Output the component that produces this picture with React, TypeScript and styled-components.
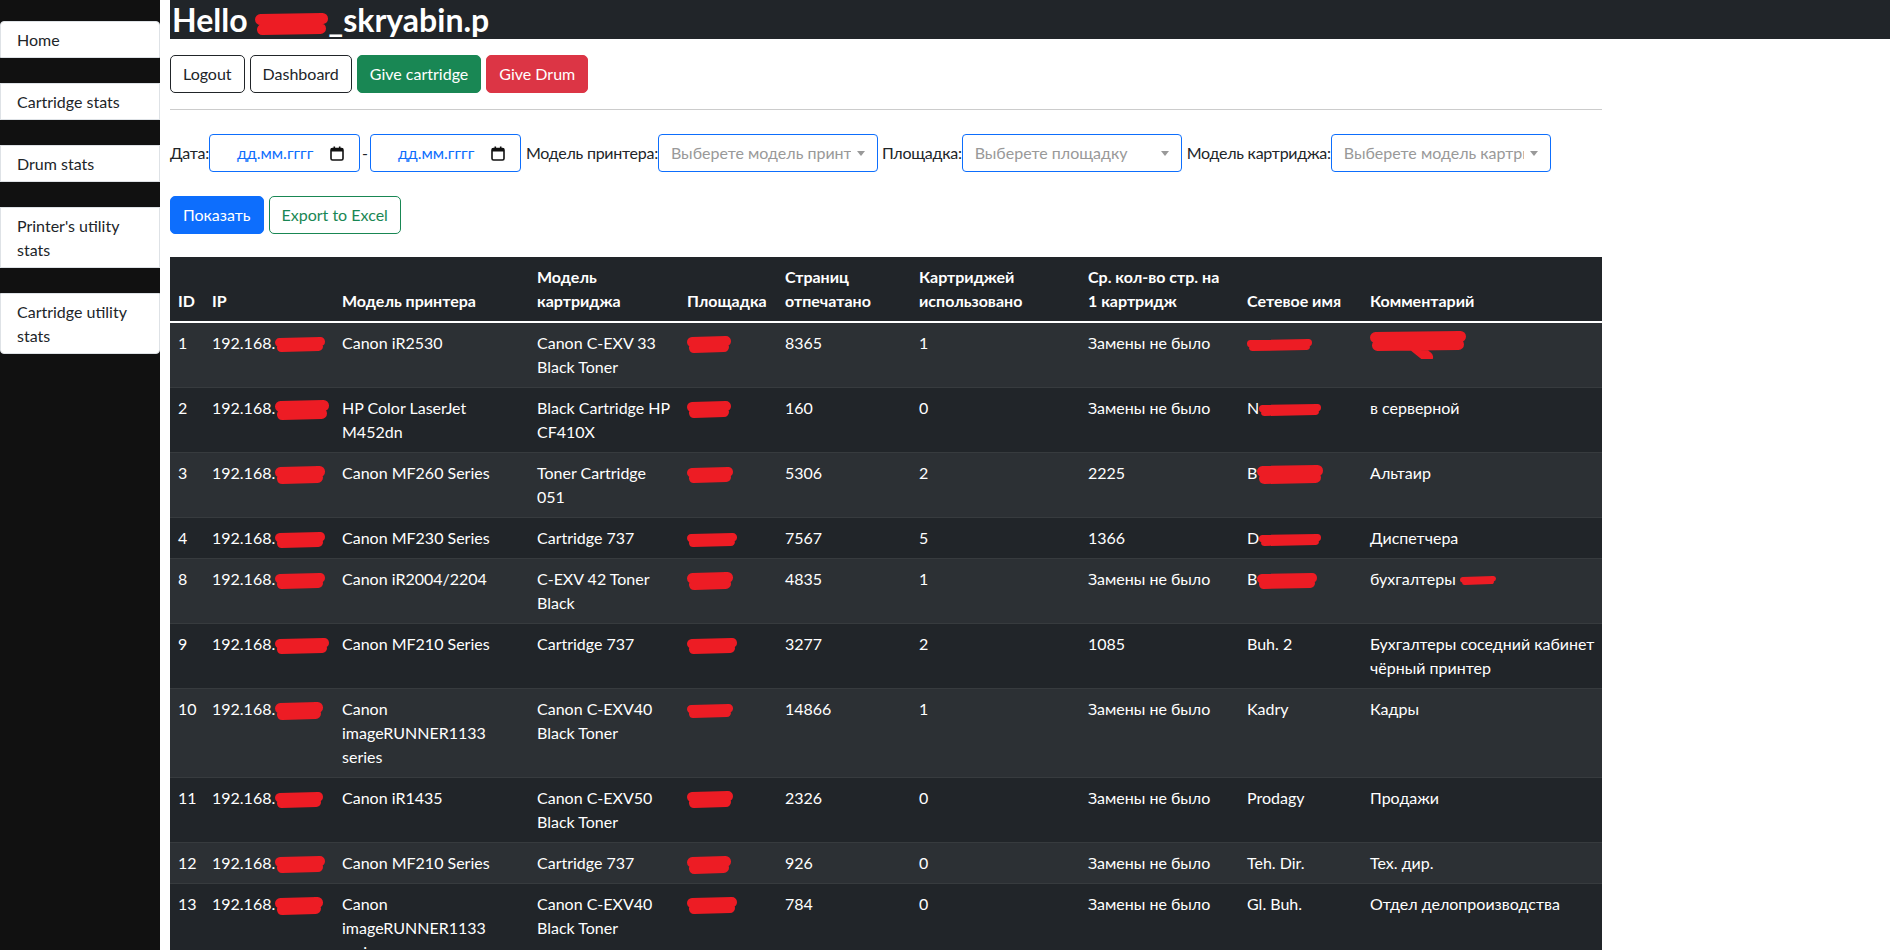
import React from "react";
import styled, { createGlobalStyle } from "styled-components";

const GlobalStyle = createGlobalStyle`
  *, *::before, *::after { box-sizing: border-box; }
  html, body { margin: 0; padding: 0; }
  body {
    font-family: "Segoe UI", Lato, Roboto, "Noto Sans", "Liberation Sans", sans-serif;
    font-size: 16px;
    line-height: 1.5;
    color: #212529;
    background: #ffffff;
  }
`;

const Layout = styled.div`
  display: flex;
  align-items: stretch;
  min-height: 100vh;
`;

const Sidebar = styled.nav`
  flex: 0 0 160px;
  background: #111111;
  padding-top: 21px;
  display: flex;
  flex-direction: column;
  gap: 25px;
`;

const NavItem = styled.a`
  display: block;
  background: #ffffff;
  border: 1px solid #dee2e6;
  padding: 6px 16px 5px;
  line-height: 24px;
  color: #212529;
  text-decoration: none;
  &:first-child { border-radius: 4px 4px 0 0; }
  &:last-child { border-radius: 0 0 4px 4px; }
`;

const Main = styled.main`
  flex: 1;
  min-width: 0;
  margin-left: 10px;
`;

const Greeting = styled.h2`
  margin: 0;
  background: #212529;
  color: #ffffff;
  font-size: 32px;
  font-weight: 700;
  line-height: 39px;
  padding-left: 2px;
  white-space: nowrap;
`;

const Content = styled.div`
  width: 1432px;
`;

const ButtonRow = styled.div<{ $top: number }>`
  display: flex;
  gap: 5px;
  margin-top: ${(p) => p.$top}px;
`;

type Variant = "outlineDark" | "success" | "danger" | "primary" | "outlineSuccess";

const palette: Record<Variant, { bg: string; fg: string; border: string }> = {
  outlineDark: { bg: "transparent", fg: "#212529", border: "#212529" },
  success: { bg: "#198754", fg: "#ffffff", border: "#198754" },
  danger: { bg: "#dc3545", fg: "#ffffff", border: "#dc3545" },
  primary: { bg: "#0d6efd", fg: "#ffffff", border: "#0d6efd" },
  outlineSuccess: { bg: "transparent", fg: "#198754", border: "#198754" },
};

const Button = styled.button<{ $variant: Variant }>`
  font: inherit;
  font-size: 16px;
  line-height: 24px;
  padding: 6px 12px;
  border-radius: 5px;
  border: 1px solid ${(p) => palette[p.$variant].border};
  background: ${(p) => palette[p.$variant].bg};
  color: ${(p) => palette[p.$variant].fg};
  cursor: pointer;
`;

const Divider = styled.hr`
  margin: 16px 0 0;
  border: 0;
  border-top: 1px solid #cccccc;
`;

const FilterRow = styled.div`
  display: flex;
  align-items: center;
  margin-top: 24px;
  height: 38px;
  white-space: nowrap;
`;

const FieldLabel = styled.label<{ $gap?: number }>`
  margin-left: ${(p) => p.$gap ?? 0}px;
  color: #212529;
  letter-spacing: -0.25px;
`;

const DateBox = styled.div`
  width: 151px;
  height: 38px;
  border: 1px solid #0d6efd;
  border-radius: 4px;
  display: flex;
  align-items: center;
  padding: 0 15px 0 27px;
  color: #0d6efd;
  svg { margin-left: auto; }
`;

const Dash = styled.span`
  margin: 0 2px;
`;

const SelectBox = styled.div`
  width: 220px;
  height: 38px;
  border: 1px solid #0d6efd;
  border-radius: 4px;
  display: flex;
  align-items: center;
  padding: 0 12px;
  color: #999999;
`;

const Placeholder = styled.span`
  flex: 1;
  min-width: 0;
  overflow: hidden;
  white-space: nowrap;
`;

const Caret = styled.span`
  flex: none;
  width: 0;
  height: 0;
  margin-left: 6px;
  border-left: 4.5px solid transparent;
  border-right: 4.5px solid transparent;
  border-top: 5px solid #999999;
`;

const Table = styled.table`
  margin-top: 23px;
  width: 100%;
  table-layout: fixed;
  border-collapse: collapse;
  background: #212529;
  color: #ffffff;
`;

const Th = styled.th`
  text-align: left;
  vertical-align: bottom;
  padding: 8px;
  font-weight: 700;
  line-height: 24px;
  border-bottom: 2px solid #ffffff;
`;

const Row = styled.tr`
  &:nth-child(odd) { background: #2c3034; }
  &:nth-child(even) { background: #212529; }
`;

const Td = styled.td`
  padding: 8px;
  vertical-align: top;
  line-height: 24px;
  border-bottom: 1px solid #373b3e;
`;

const NoWrap = styled.span`
  white-space: nowrap;
`;

const RedMark = styled.svg`
  display: inline-block;
  vertical-align: middle;
`;

const Scribble = ({ w, h, tail }: { w: number; h: number; tail?: boolean }) => {
  const s = Math.min(h * 0.6, 11);
  const r = s / 2;
  const d = `M${r} ${r + 1} L${w - r} ${r} L${r + 2} ${h - r} L${w - r - 2} ${h - r - 1}`;
  const tailPath = tail ? ` M${w * 0.45} ${h - r} L${w * 0.6} ${h + 6}` : "";
  const fullH = tail ? h + 8 : h;
  return (
    <RedMark width={w} height={fullH} viewBox={`0 0 ${w} ${fullH}`} aria-hidden="true">
      <path
        d={d + tailPath}
        stroke="#ed1c24"
        strokeWidth={s}
        fill="none"
        strokeLinecap="round"
        strokeLinejoin="round"
      />
    </RedMark>
  );
};

const CalendarIcon = () => (
  <svg width="14" height="15" viewBox="0 0 14 15" aria-hidden="true">
    <rect x="1" y="2.5" width="12" height="11.5" rx="1.5" fill="none" stroke="#111" strokeWidth="1.6" />
    <rect x="1" y="2.5" width="12" height="3" fill="#111" />
    <rect x="3.5" y="0.5" width="1.6" height="3" fill="#111" />
    <rect x="8.9" y="0.5" width="1.6" height="3" fill="#111" />
  </svg>
);

type Cell = React.ReactNode;
type RowData = Cell[];

const ip = (w: number, h: number) => (
  <NoWrap>
    192.168.
    <Scribble w={w} h={h} />
  </NoWrap>
);

const site = (w = 44, h = 17) => <Scribble w={w} h={h} />;

const lead = (ch: string, w: number, h: number) => (
  <NoWrap>
    {ch}
    <Scribble w={w} h={h} />
  </NoWrap>
);

const rows: RowData[] = [
  ["1", ip(50, 15), "Canon iR2530", "Canon C-EXV 33 Black Toner", site(), "8365", "1", "Замены не было", <Scribble w={65} h={12} />, <Scribble w={96} h={20} tail />],
  ["2", ip(54, 20), "HP Color LaserJet M452dn", "Black Cartridge HP CF410X", site(), "160", "0", "Замены не было", lead("N", 62, 12), "в серверной"],
  ["3", ip(50, 18), "Canon MF260 Series", "Toner Cartridge 051", site(46, 16), "5306", "2", "2225", lead("B", 66, 19), "Альтаир"],
  ["4", ip(50, 16), "Canon MF230 Series", "Cartridge 737", site(50, 14), "7567", "5", "1366", lead("D", 62, 12), "Диспетчера"],
  ["8", ip(50, 16), "Canon iR2004/2204", "C-EXV 42 Toner Black", site(46, 18), "4835", "1", "Замены не было", lead("B", 60, 16), <NoWrap>бухгалтеры <Scribble w={36} h={9} /></NoWrap>],
  ["9", ip(54, 16), "Canon MF210 Series", "Cartridge 737", site(50, 16), "3277", "2", "1085", "Buh. 2", <><NoWrap>Бухгалтеры соседний кабинет</NoWrap><br />чёрный принтер</>],
  ["10", ip(48, 18), "Canon imageRUNNER1133 series", "Canon C-EXV40 Black Toner", site(46, 14), "14866", "1", "Замены не было", "Kadry", "Кадры"],
  ["11", ip(48, 16), "Canon iR1435", "Canon C-EXV50 Black Toner", site(46, 17), "2326", "0", "Замены не было", "Prodagy", "Продажи"],
  ["12", ip(50, 17), "Canon MF210 Series", "Cartridge 737", site(44, 18), "926", "0", "Замены не было", "Teh. Dir.", "Тех. дир."],
  ["13", ip(48, 18), "Canon imageRUNNER1133 series", "Canon C-EXV40 Black Toner", site(50, 17), "784", "0", "Замены не было", "Gl. Buh.", "Отдел делопроизводства"],
];

const columns: { title: React.ReactNode; width: number }[] = [
  { title: "ID", width: 34 },
  { title: "IP", width: 130 },
  { title: "Модель принтера", width: 195 },
  { title: "Модель картриджа", width: 150 },
  { title: "Площадка", width: 98 },
  { title: "Страниц отпечатано", width: 134 },
  { title: "Картриджей использовано", width: 169 },
  { title: "Ср. кол-во стр. на 1 картридж", width: 159 },
  { title: "Сетевое имя", width: 123 },
  { title: "Комментарий", width: 240 },
];

const navItems = ["Home", "Cartridge stats", "Drum stats", "Printer's utility stats", "Cartridge utility stats"];

export default function App() {
  return (
    <>
      <GlobalStyle />
      <Layout>
        <Sidebar>
          {navItems.map((n) => (
            <NavItem key={n} href="#">
              {n}
            </NavItem>
          ))}
        </Sidebar>
        <Main>
          <Greeting>
            Hello <Scribble w={73} h={22} />_skryabin.p
          </Greeting>
          <Content>
            <ButtonRow $top={16}>
              <Button $variant="outlineDark">Logout</Button>
              <Button $variant="outlineDark">Dashboard</Button>
              <Button $variant="success">Give cartridge</Button>
              <Button $variant="danger">Give Drum</Button>
            </ButtonRow>
            <Divider />
            <FilterRow>
              <FieldLabel>Дата:</FieldLabel>
              <DateBox>
                <span>дд.мм.гггг</span>
                <CalendarIcon />
              </DateBox>
              <Dash>-</Dash>
              <DateBox>
                <span>дд.мм.гггг</span>
                <CalendarIcon />
              </DateBox>
              <FieldLabel $gap={5}>Модель принтера:</FieldLabel>
              <SelectBox>
                <Placeholder>Выберете модель принтера</Placeholder>
                <Caret />
              </SelectBox>
              <FieldLabel $gap={4}>Площадка:</FieldLabel>
              <SelectBox>
                <Placeholder>Выберете площадку</Placeholder>
                <Caret />
              </SelectBox>
              <FieldLabel $gap={5}>Модель картриджа:</FieldLabel>
              <SelectBox>
                <Placeholder>Выберете модель картриджа</Placeholder>
                <Caret />
              </SelectBox>
            </FilterRow>
            <ButtonRow $top={24}>
              <Button $variant="primary">Показать</Button>
              <Button $variant="outlineSuccess">Export to Excel</Button>
            </ButtonRow>
            <Table>
              <colgroup>
                {columns.map((c, i) => (
                  <col key={i} style={{ width: c.width }} />
                ))}
              </colgroup>
              <thead>
                <tr>
                  {columns.map((c, i) => (
                    <Th key={i}>{c.title}</Th>
                  ))}
                </tr>
              </thead>
              <tbody>
                {rows.map((r, i) => (
                  <Row key={i}>
                    {r.map((c, j) => (
                      <Td key={j}>{c}</Td>
                    ))}
                  </Row>
                ))}
              </tbody>
            </Table>
          </Content>
        </Main>
      </Layout>
    </>
  );
}
